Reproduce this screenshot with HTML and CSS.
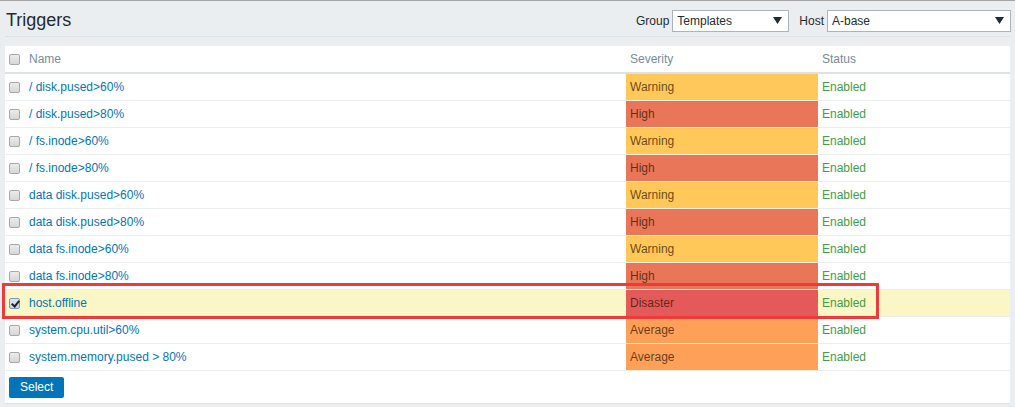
FILE: index.html
```html
<!DOCTYPE html>
<html>
<head>
<meta charset="utf-8">
<link rel="stylesheet" href="styles.css">
</head>
<body>
<div class="page">
  <header class="header">
    <h1 class="title">Triggers</h1>
    <div class="filters">
      <label class="flabel">Group</label>
      <div class="select select-group"><span>Templates</span><svg width="9" height="7" viewBox="0 0 9 7"><path d="M0 0h9L4.5 7z" fill="#1f2c33"/></svg></div>
      <label class="flabel host-label">Host</label>
      <div class="select select-host"><span>A-base</span><svg width="9" height="7" viewBox="0 0 9 7"><path d="M0 0h9L4.5 7z" fill="#1f2c33"/></svg></div>
    </div>
  </header>

  <div class="panel">
    <table class="list">
      <thead>
        <tr>
          <th class="c-cb"><input type="checkbox" class="cb"></th>
          <th class="c-name">Name</th>
          <th class="c-sev">Severity</th>
          <th class="c-status">Status</th>
        </tr>
      </thead>
      <tbody>
        <tr><td class="c-cb"><input type="checkbox" class="cb"></td><td class="c-name"><a>/ disk.pused&gt;60%</a></td><td class="c-sev warning">Warning</td><td class="c-status">Enabled</td></tr>
        <tr><td class="c-cb"><input type="checkbox" class="cb"></td><td class="c-name"><a>/ disk.pused&gt;80%</a></td><td class="c-sev high">High</td><td class="c-status">Enabled</td></tr>
        <tr><td class="c-cb"><input type="checkbox" class="cb"></td><td class="c-name"><a>/ fs.inode&gt;60%</a></td><td class="c-sev warning">Warning</td><td class="c-status">Enabled</td></tr>
        <tr><td class="c-cb"><input type="checkbox" class="cb"></td><td class="c-name"><a>/ fs.inode&gt;80%</a></td><td class="c-sev high">High</td><td class="c-status">Enabled</td></tr>
        <tr><td class="c-cb"><input type="checkbox" class="cb"></td><td class="c-name"><a>data disk.pused&gt;60%</a></td><td class="c-sev warning">Warning</td><td class="c-status">Enabled</td></tr>
        <tr><td class="c-cb"><input type="checkbox" class="cb"></td><td class="c-name"><a>data disk.pused&gt;80%</a></td><td class="c-sev high">High</td><td class="c-status">Enabled</td></tr>
        <tr><td class="c-cb"><input type="checkbox" class="cb"></td><td class="c-name"><a>data fs.inode&gt;60%</a></td><td class="c-sev warning">Warning</td><td class="c-status">Enabled</td></tr>
        <tr><td class="c-cb"><input type="checkbox" class="cb"></td><td class="c-name"><a>data fs.inode&gt;80%</a></td><td class="c-sev high">High</td><td class="c-status">Enabled</td></tr>
        <tr class="selected"><td class="c-cb"><input type="checkbox" class="cb" checked></td><td class="c-name"><a>host.offline</a></td><td class="c-sev disaster">Disaster</td><td class="c-status">Enabled</td></tr>
        <tr><td class="c-cb"><input type="checkbox" class="cb"></td><td class="c-name"><a>system.cpu.util&gt;60%</a></td><td class="c-sev average">Average</td><td class="c-status">Enabled</td></tr>
        <tr><td class="c-cb"><input type="checkbox" class="cb"></td><td class="c-name"><a>system.memory.pused &gt; 80%</a></td><td class="c-sev average">Average</td><td class="c-status">Enabled</td></tr>
      </tbody>
    </table>
    <div class="footer">
      <button class="btn">Select</button>
    </div>
  </div>
</div>
<div class="annot"></div>
</body>
</html>
```

FILE: styles.css
```css
html, body {
  margin: 0;
  padding: 0;
}
body {
  position: relative;
  background: #ebeef0;
  border-top: 1px solid #a4a4a4;
  font-family: Arial, "Liberation Sans", sans-serif;
  font-size: 12px;
  color: #1f2c33;
  height: 406px;
  overflow: hidden;
}
.page {
  padding: 0 5px;
}
.header {
  display: flex;
  justify-content: space-between;
  align-items: center;
  height: 35px;
  border-bottom: 1px solid #dde2e5;
}
.title {
  margin: 0 0 0 1px;
  font-size: 18px;
  font-weight: normal;
  color: #1f2c33;
  line-height: 20px;
  position: relative;
  top: 1px;
}
.filters {
  display: flex;
  align-items: center;
  margin-right: -1px;
  position: relative;
  top: 2px;
}
.flabel {
  margin-right: 3px;
}
.host-label {
  margin-left: 10px;
}
.select {
  display: flex;
  align-items: center;
  justify-content: space-between;
  box-sizing: border-box;
  height: 22px;
  border: 1px solid #a9b5bb;
  background: #fff;
  padding: 0 6px 0 4px;
  font-size: 12px;
}
.select svg {
  display: block;
}
.select-group {
  width: 117px;
}
.select-host {
  width: 184px;
}
.panel {
  margin-top: 9px;
  background: #fff;
  border-bottom: 1px solid #dde2e5;
}
.list {
  width: 100%;
  border-collapse: collapse;
  table-layout: fixed;
}
.list th,
.list td {
  height: 26px;
  padding: 0 4px;
  text-align: left;
  vertical-align: middle;
  white-space: nowrap;
  border-bottom: 1px solid #ebeef0;
}
.list th {
  font-weight: normal;
  color: #768d99;
  border-bottom: 2px solid #dde2e5;
}
.list .c-cb {
  width: 12px;
  padding: 0 4px 0 4px;
}
.list .c-sev {
  width: 184px;
}
.list .c-status {
  width: 184px;
  color: #429e47;
}
.list th.c-status {
  color: #768d99;
}
.list a {
  color: #0275b8;
  text-decoration: none;
}
.list td.c-sev {
  color: rgba(40, 20, 0, 0.72);
  border-bottom-color: #f6ecdc;
}
.warning { background: #ffc859; }
.high { background: #e97659; }
.disaster { background: #e45959; }
.average { background: #ffa059; }
.list tr.selected td {
  background: #fbf6c6;
}
.list tr.selected td.c-sev {
  background: #e45959;
}
.cb {
  appearance: none;
  -webkit-appearance: none;
  display: block;
  box-sizing: border-box;
  width: 11px;
  height: 11px;
  margin: 0;
  border: 1px solid #a8a8a8;
  border-radius: 2px;
  background: linear-gradient(#ececec, #d6d6d6);
  position: relative;
}
.cb:checked {
  border-color: #7a9cc0;
  background: linear-gradient(#dce6f0, #c4d3e2);
}
.cb:checked::after {
  content: "";
  position: absolute;
  left: 3px;
  top: 0px;
  width: 3px;
  height: 6px;
  border-right: 2px solid #222;
  border-bottom: 2px solid #222;
  transform: rotate(40deg);
}
.footer {
  padding: 6px 4px 5px;
}
.btn {
  display: block;
  height: 21px;
  padding: 0 11px;
  border: none;
  border-radius: 2px;
  background: #0275b8;
  color: #fff;
  font-family: Arial, "Liberation Sans", sans-serif;
  font-size: 12px;
  line-height: 21px;
}
.annot {
  position: absolute;
  left: 2px;
  top: 282px;
  width: 877px;
  height: 36px;
  box-sizing: border-box;
  border: 3px solid #f03a3a;
  pointer-events: none;
}
```
